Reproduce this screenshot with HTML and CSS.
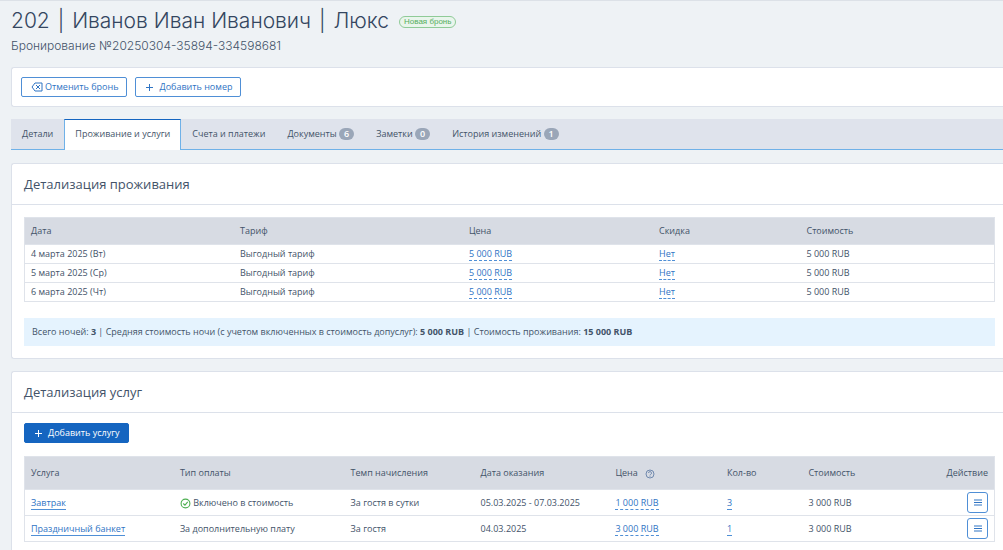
FILE: index.html
```html
<!DOCTYPE html>
<html lang="ru">
<head>
    <meta charset="UTF-8">
    <meta name="viewport" content="width=device-width, initial-scale=1.0">
    <title>Бронирование №20250304-35894-334598681</title>
    <link rel="stylesheet" href="styles.css">
</head>
<body>
    <header class="page-header">
        <div class="title-row">
            <h1>202 <span class="divider">|</span> Иванов Иван Иванович <span class="divider">|</span> Люкс</h1>
            <span class="status">Новая бронь</span>
        </div>
        <p class="booking-number">Бронирование №20250304-35894-334598681</p>
    </header>

    <div class="card toolbar">
        <button class="button" type="button">
            <svg class="icon-cancel" width="12" height="10" viewBox="0 0 12 10" fill="none" stroke="currentColor">
                <path d="M4 1h7v8H4L1 5z"/>
                <path d="M5 3l4 4M9 3L5 7"/>
            </svg>
            Отменить бронь
        </button>
        <button class="button" type="button">
            <svg class="icon-plus" width="9" height="9" viewBox="0 0 9 9" stroke="currentColor">
                <path d="M4.500 1v7M1 4.500h7"/>
            </svg>
            Добавить номер
        </button>
    </div>

    <nav class="tabs">
        <a class="tab" href="#">Детали</a>
        <a class="tab active" href="#">Проживание и услуги</a>
        <a class="tab" href="#">Счета и платежи</a>
        <a class="tab" href="#">Документы <span class="count">6</span></a>
        <a class="tab" href="#">Заметки <span class="count">0</span></a>
        <a class="tab" href="#">История изменений <span class="count">1</span></a>
    </nav>

    <section class="card">
        <h2>Детализация проживания</h2>
        <div class="card-body">
            <table class="stay-table">
                <thead>
                    <tr>
                        <th class="col-date">Дата</th>
                        <th class="col-rate">Тариф</th>
                        <th class="col-price">Цена</th>
                        <th class="col-discount">Скидка</th>
                        <th>Стоимость</th>
                    </tr>
                </thead>
                <tbody>
                    <tr>
                        <td>4 марта 2025 (Вт)</td>
                        <td>Выгодный тариф</td>
                        <td><a class="edit" href="#">5 000 RUB</a></td>
                        <td><a class="edit" href="#">Нет</a></td>
                        <td>5 000 RUB</td>
                    </tr>
                    <tr>
                        <td>5 марта 2025 (Ср)</td>
                        <td>Выгодный тариф</td>
                        <td><a class="edit" href="#">5 000 RUB</a></td>
                        <td><a class="edit" href="#">Нет</a></td>
                        <td>5 000 RUB</td>
                    </tr>
                    <tr>
                        <td>6 марта 2025 (Чт)</td>
                        <td>Выгодный тариф</td>
                        <td><a class="edit" href="#">5 000 RUB</a></td>
                        <td><a class="edit" href="#">Нет</a></td>
                        <td>5 000 RUB</td>
                    </tr>
                </tbody>
            </table>
            <p class="summary">Всего ночей: <b>3</b> | Средняя стоимость ночи (с учетом включенных в стоимость допуслуг): <b>5 000 RUB</b> | Стоимость проживания: <b>15 000 RUB</b></p>
        </div>
    </section>

    <section class="card">
        <h2>Детализация услуг</h2>
        <div class="card-body services">
            <button class="button primary" type="button">
                <svg class="icon-plus" width="9" height="9" viewBox="0 0 9 9" stroke="currentColor">
                    <path d="M4.500 1v7M1 4.500h7"/>
                </svg>
                Добавить услугу
            </button>
            <table class="services-table">
                <thead>
                    <tr>
                        <th class="col-service">Услуга</th>
                        <th class="col-payment">Тип оплаты</th>
                        <th class="col-pace">Темп начисления</th>
                        <th class="col-day">Дата оказания</th>
                        <th class="col-cost">Цена
                            <svg class="icon-help" width="10" height="10" viewBox="0 0 20 20" fill="none" stroke="currentColor" stroke-width="2">
                                <circle cx="10" cy="10" r="8"/>
                                <path d="M7 8a3 3 0 1 1 4 3q-1 .5-1 1.500M10 13.500v2"/>
                            </svg>
                        </th>
                        <th class="col-amount">Кол-во</th>
                        <th>Стоимость</th>
                        <th class="action">Действие</th>
                    </tr>
                </thead>
                <tbody>
                    <tr>
                        <td><a class="name" href="#">Завтрак</a></td>
                        <td>
                            <svg class="icon-check" width="11" height="11" viewBox="0 0 20 20" fill="none" stroke="currentColor" stroke-width="2">
                                <circle cx="10" cy="10" r="8"/>
                                <path d="M6 10l3 3 5-6"/>
                            </svg>
                            Включено в стоимость
                        </td>
                        <td>За гостя в сутки</td>
                        <td>05.03.2025 - 07.03.2025</td>
                        <td><a class="edit" href="#">1 000 RUB</a></td>
                        <td><a class="edit" href="#">3</a></td>
                        <td>3 000 RUB</td>
                        <td class="action">
                            <button class="menu" type="button" aria-label="Действие">
                                <svg width="8" height="7" viewBox="0 0 8 7" stroke="currentColor"><path d="M0 1h8M0 3.500h8M0 6h8"/></svg>
                            </button>
                        </td>
                    </tr>
                    <tr>
                        <td><a class="name" href="#">Праздничный банкет</a></td>
                        <td>За дополнительную плату</td>
                        <td>За гостя</td>
                        <td>04.03.2025</td>
                        <td><a class="edit" href="#">3 000 RUB</a></td>
                        <td><a class="edit" href="#">1</a></td>
                        <td>3 000 RUB</td>
                        <td class="action">
                            <button class="menu" type="button" aria-label="Действие">
                                <svg width="8" height="7" viewBox="0 0 8 7" stroke="currentColor"><path d="M0 1h8M0 3.500h8M0 6h8"/></svg>
                            </button>
                        </td>
                    </tr>
                </tbody>
            </table>
        </div>
    </section>
</body>
</html>
```
FILE: styles.css
```css
* {
    box-sizing: border-box;
}
body {
    margin: 0;
    padding: 0 0 8px 11px;
    border-top: 1px solid #dce1e7;
    font-family: "Open Sans", "Noto Sans", sans-serif;
    font-size: 9px;
    line-height: 14px;
    color: #435369;
    background-color: #eef2f5;
}
.page-header {
    font-family: Inter, "Liberation Sans", sans-serif;
}
.title-row {
    display: flex;
    align-items: center;
    gap: 10px;
    padding-top: 6px;
}
h1 {
    margin: 0;
    font-size: 21px;
    line-height: 28px;
    font-weight: 300;
    color: #34465f;
}
.divider {
    margin: 0 2px;
}
.status {
    margin-top: 2px;
    padding: 0 4px;
    border: 1px solid #8fcb97;
    border-radius: 6px;
    font-family: "Liberation Sans", Arial, sans-serif;
    font-size: 8px;
    line-height: 10px;
    color: #55ad60;
    background-color: #e9f5ec;
}
.booking-number {
    margin: 2px 0 13px;
    font-size: 12px;
    line-height: 17px;
    font-weight: 300;
}
.card {
    margin-bottom: 12px;
    border: 1px solid #dce1ea;
    border-right: none;
    border-radius: 3px 0 0 3px;
    background-color: #fff;
}
.toolbar {
    display: flex;
    gap: 8px;
    padding: 9px;
}
.button {
    display: flex;
    align-items: center;
    height: 20px;
    padding: 0 8px 0 9px;
    border: 1px solid #4f8fd6;
    border-radius: 2px;
    font-family: inherit;
    font-size: 9px;
    line-height: 14px;
    color: #2f74c4;
    background-color: #fff;
    cursor: pointer;
}
.button.primary {
    border-color: #1565c0;
    color: #fff;
    background-color: #1565c0;
}
.icon-cancel {
    margin-right: 2px;
}
.icon-plus {
    margin-right: 5px;
}
.tabs {
    display: flex;
    margin-bottom: 13px;
    border-bottom: 1px solid #6fb1e8;
    background-color: #dfe3ec;
}
.tab {
    padding: 8px 11px;
    color: #435369;
    text-decoration: none;
}
.tab.active {
    margin-bottom: -1px;
    padding: 7px 10px 9px;
    border: 1px solid #6fb1e8;
    border-top-color: #1565c0;
    border-bottom: none;
    background-color: #fff;
}
.count {
    display: inline-block;
    padding: 0 5px;
    border-radius: 6px;
    font-weight: 600;
    line-height: 12px;
    color: #fff;
    background-color: #9aa6b8;
}
h2 {
    margin: 0;
    padding: 11px 12px;
    border-bottom: 1px solid #dce1ea;
    font-size: 13px;
    line-height: 18px;
    font-weight: normal;
}
.card-body {
    padding: 12px 8px 12px 12px;
}
.card-body.services {
    padding-top: 10px;
}
table {
    width: 100%;
    table-layout: fixed;
    border-collapse: collapse;
    border: 1px solid #dfe3ea;
}
th {
    padding: 0 6px;
    font-weight: normal;
    text-align: left;
    background-color: #d7dbe3;
}
td {
    padding: 0 6px;
    border-top: 1px solid #dfe3ea;
    white-space: nowrap;
}
.stay-table th {
    height: 27px;
}
.stay-table td {
    padding-top: 2px;
    padding-bottom: 2px;
}
.col-date { width: 21.6%; }
.col-rate { width: 23.6%; }
.col-price { width: 19.6%; }
.col-discount { width: 15.2%; }
.summary {
    margin: 16px 0 0;
    padding: 7px 8px;
    background-color: #e5f3fe;
}
.services-table {
    margin-top: 13px;
}
.services-table th {
    height: 33px;
}
.services-table td {
    height: 26px;
}
.col-service { width: 15.4%; }
.col-payment { width: 17.6%; }
.col-pace { width: 13.4%; }
.col-day { width: 13.9%; }
.col-cost { width: 11.5%; }
.col-amount { width: 8.4%; }
.services-table .action {
    text-align: right;
}
.edit,
.name {
    color: #2f74c4;
    text-decoration: none;
    border-bottom: 1px dashed #4f8fd6;
}
.name {
    border-bottom-style: solid;
}
.icon-help {
    margin-left: 5px;
    vertical-align: middle;
    color: #7089ae;
}
.icon-check {
    vertical-align: middle;
    color: #4caf50;
}
.menu {
    display: inline-flex;
    align-items: center;
    justify-content: center;
    width: 21px;
    height: 21px;
    padding: 0;
    border: 1px solid #4f8fd6;
    border-radius: 3px;
    vertical-align: middle;
    color: #2f74c4;
    background-color: #fff;
    cursor: pointer;
}
```
